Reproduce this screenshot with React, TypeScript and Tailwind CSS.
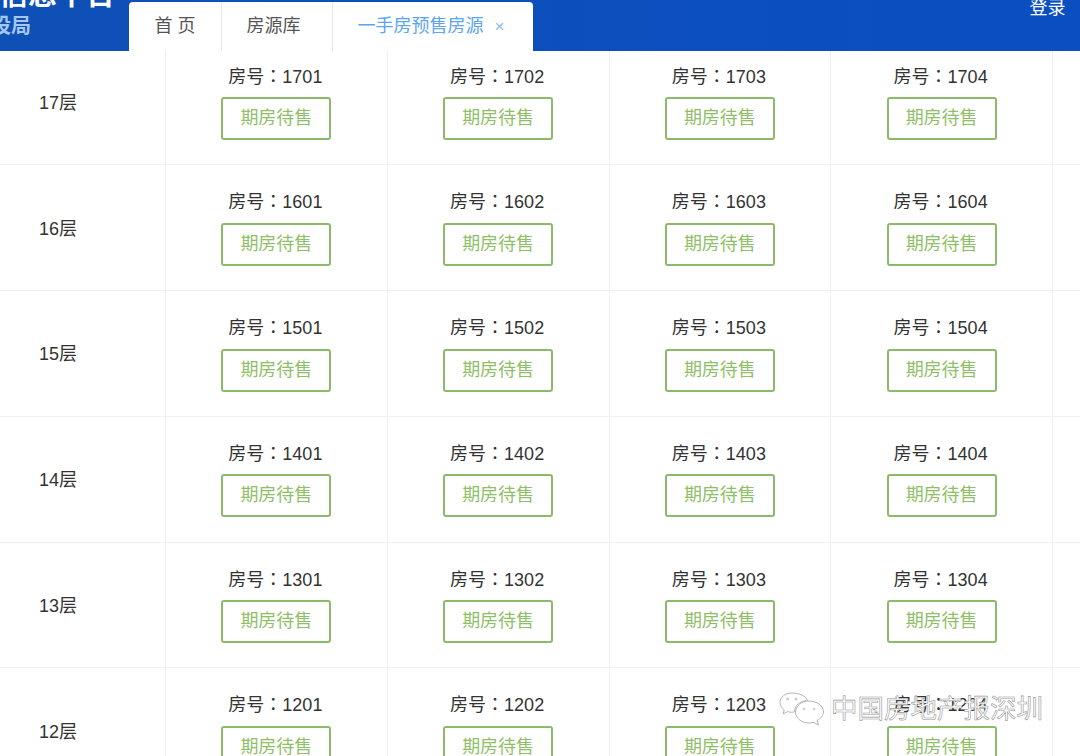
import React from "react";

const floors = [17, 16, 15, 14, 13, 12];
const units = ["01", "02", "03", "04"];

const Tab: React.FC<{ active?: boolean; className: string; children: React.ReactNode }> = ({
  active,
  className,
  children,
}) => (
  <div
    className={`flex h-full items-center justify-center border-r border-[#e6e8ec] text-[18px] ${
      active ? "text-[#5ba6ee]" : "text-[#555]"
    } ${className}`}
  >
    {children}
  </div>
);

const Room: React.FC<{ no: string }> = ({ no }) => (
  <div className="flex h-full w-[221.75px] shrink-0 flex-col items-center border-r border-[#eef0f4] pt-[23px]">
    <div className="h-6 pr-[2px] text-[18px] leading-6 text-[#333]">
      房号<span className="font-['Noto_Sans_CJK_TC',sans-serif]">：</span>
      {no}
    </div>
    <button className="mt-[10.5px] h-[43px] w-[110px] rounded-[3px] border-2 border-[#8dba6a] bg-white text-[18px] text-[#8fbf68]">
      期房待售
    </button>
  </div>
);

const Watermark: React.FC = () => (
  <div className="absolute left-[779px] top-[690px] flex items-center">
    <svg width="46" height="37" viewBox="0 0 46 37" fill="#fff" stroke="#b4b4b4" strokeWidth="1">
      <path d="M12.5 3C6 3 1 7.2 1 12.5c0 3 1.7 5.6 4.3 7.4L4 24l4.6-2.4c1.3.4 2.6.6 3.9.6 1 0 2-.1 3-.4 0-6.5 6-11.3 13-11C27 5.8 20.5 3 12.5 3z" />
      <path d="M30 11c-7.5 0-13.5 5-13.5 11s6 11 13.5 11c1.6 0 3-.2 4.4-.7l5 2.7-1.3-4.6C41.800 28.400 44.500 25.400 44.500 22c0-6-6.500-11-14.500-11z" />
      <circle cx="8.500" cy="9" r="1.500" fill="#ccc" stroke="none" />
      <circle cx="17" cy="9" r="1.500" fill="#ccc" stroke="none" />
      <circle cx="25" cy="19" r="1.300" fill="#ccc" stroke="none" />
      <circle cx="35" cy="19" r="1.300" fill="#ccc" stroke="none" />
    </svg>
    <span className="ml-[6px] whitespace-nowrap text-[26.500px] leading-9 text-white [-webkit-text-stroke:0.600px_#999]">
      中国房地产报深圳
    </span>
  </div>
);

export default function App() {
  return (
    <div className="relative flex h-[756px] w-[1080px] flex-col overflow-hidden bg-white font-['Liberation_Sans','Noto_Sans_CJK_SC',sans-serif]">
      {/* Header */}
      <header className="relative flex h-[51px] shrink-0 bg-gradient-to-r from-[#0f50b6] to-[#0a4ec2]">
        <div className="-mt-[20px] flex w-[115px] shrink-0 flex-col items-end overflow-hidden">
          <div className="whitespace-nowrap text-[29px] font-bold leading-[30px] text-white">信息平台</div>
          <div className="mt-[2px] w-full overflow-hidden whitespace-nowrap text-[20px] font-bold leading-[28px] text-[#a3c7f2]">
            <span className="-ml-[9px]">设局</span>
          </div>
        </div>
        <div className="ml-[14px] mt-[2px] flex h-[49px] w-[404px] rounded-t-[4px] bg-white">
          <Tab className="w-[93px]">首 页</Tab>
          <Tab className="w-[111px] pr-[7px]">房源库</Tab>
          <Tab active className="flex-1 gap-[11px] border-r-0 pr-[4px]">
            <span>一手房预售房源</span>
            <span className="text-[17px] leading-none text-[#8dbdf0]">×</span>
          </Tab>
        </div>
        <div className="absolute left-[1029.500px] -top-[4px] text-[18px] leading-6 text-white">登录</div>
      </header>

      {/* Floor table, scrolled so 17F sits under the tabs */}
      <main className="min-h-0 flex-1 overflow-hidden">
        <div className="-mt-[11.5px]">
          {floors.map((floor) => (
            <div key={floor} className="flex h-[125.750px] border-b border-[#eef0f4]">
              <div className="flex h-full w-[166px] shrink-0 items-center justify-center border-r border-[#eef0f4] pr-[49px] pt-[3px] text-[18px] text-[#333]">
                {floor}层
              </div>
              {units.map((unit) => (
                <Room key={unit} no={`${floor}${unit}`} />
              ))}
            </div>
          ))}
        </div>
      </main>

      <Watermark />
    </div>
  );
}
